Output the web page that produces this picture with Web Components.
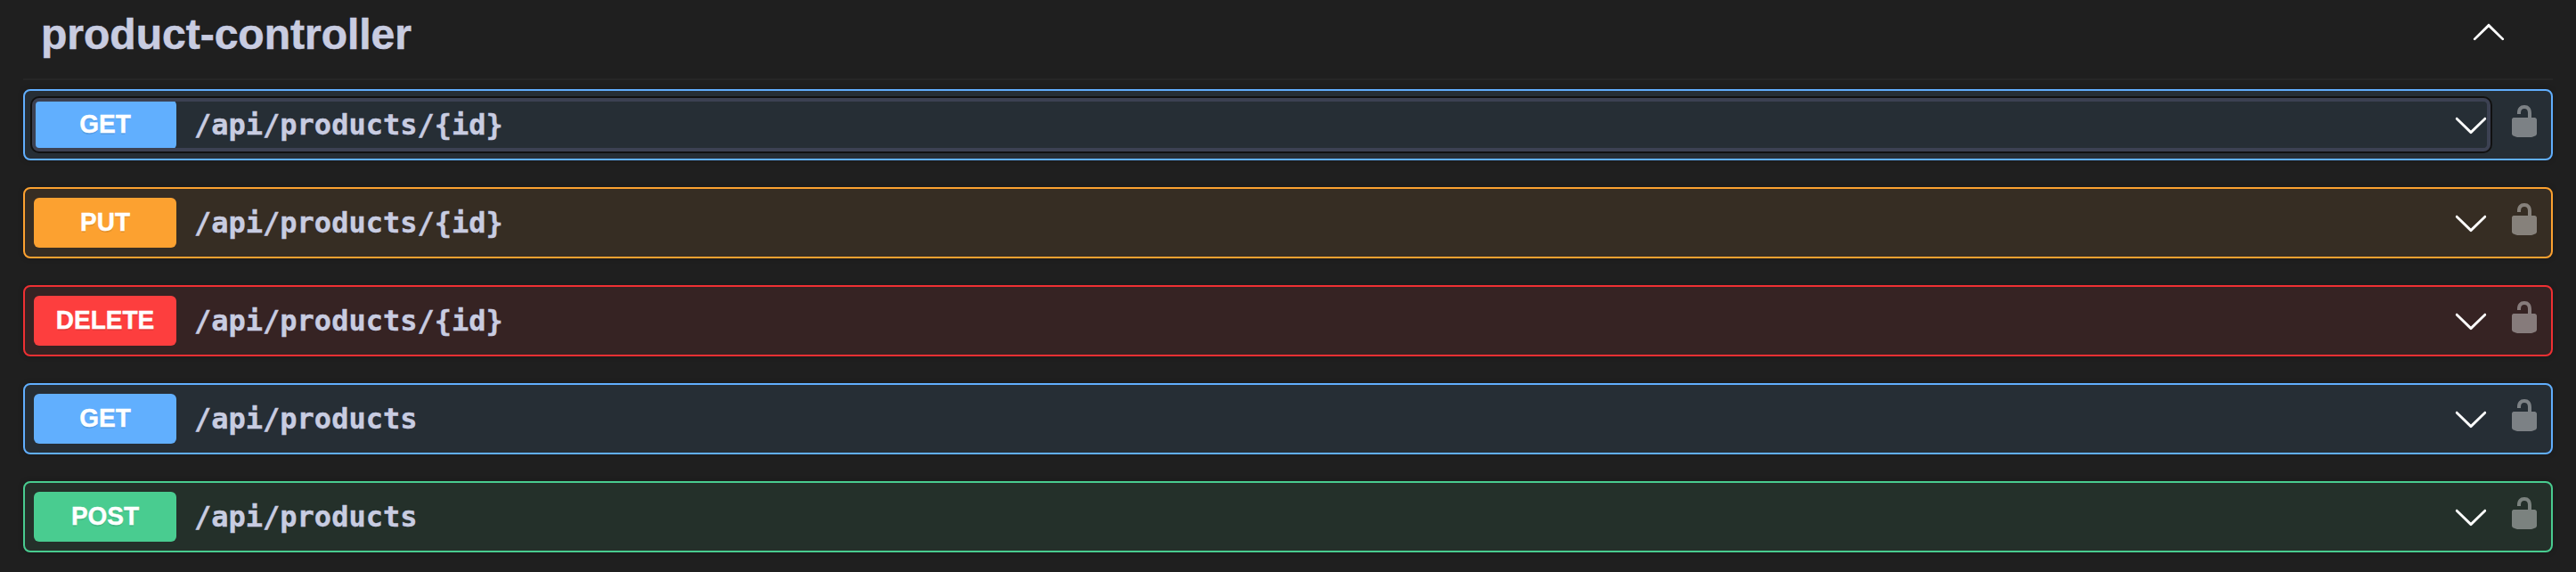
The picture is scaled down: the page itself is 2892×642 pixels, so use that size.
<!DOCTYPE html>
<html lang="en">
<head>
<meta charset="utf-8">
<title>product-controller</title>
<style>
html, body { margin: 0; background: #1f1f1f; }
body { height: 642px; overflow: hidden; font-family: "Liberation Sans", Arial, sans-serif; }
</style>
</head>
<body>
<api-tag name="product-controller">
  <api-operation method="get" path="/api/products/{id}" focused></api-operation>
  <api-operation method="put" path="/api/products/{id}"></api-operation>
  <api-operation method="delete" path="/api/products/{id}"></api-operation>
  <api-operation method="get" path="/api/products"></api-operation>
  <api-operation method="post" path="/api/products"></api-operation>
</api-tag>
<script>
const PATHS = {
  up: 'M17.418 14.908C17.69 15.176 18.127 15.176 18.397 14.908C18.667 14.64 18.668 14.207 18.397 13.939L10.489 6.109C10.219 5.841 9.782 5.841 9.51 6.109L1.602 13.939C1.332 14.207 1.332 14.64 1.602 14.908C1.873 15.176 2.311 15.176 2.581 14.908L10 7.767Z',
  down: 'M17.418 6.109c.272-.268.709-.268.979 0s.271.701 0 .969l-7.908 7.83c-.27.268-.707.268-.979 0l-7.908-7.83c-.27-.268-.27-.701 0-.969.271-.268.709-.268.979 0L10 13.25z',
  unlocked: 'M15.8 8H14V5.6C14 2.703 12.665 1 10 1 7.334 1 6 2.703 6 5.6V6h2v-.801C8 3.754 8.797 3 10 3c1.203 0 2 .754 2 2.199V8H4c-.553 0-1 .646-1 1.199V17c0 .549.428 1.139.951 1.307l1.197.387C5.672 18.861 6.55 19 7.1 19h5.8c.549 0 1.428-.139 1.951-.307l1.196-.387c.524-.167.953-.757.953-1.306V9.199C17 8.646 16.352 8 15.8 8z'
};

class ApiIcon extends HTMLElement {
  connectedCallback() {
    this.attachShadow({ mode: 'open' }).innerHTML = `
      <style>
        :host { display: block; width: 40px; height: 40px; flex: none; color: #fff; }
        svg { display: block; width: 100%; height: 100%; fill: currentColor; }
      </style>
      <svg viewBox="0 0 20 20" aria-hidden="true"><path d="${PATHS[this.getAttribute('name')]}"/></svg>`;
  }
}

class MethodBadge extends HTMLElement {
  constructor() {
    super();
    this.attachShadow({ mode: 'open' }).innerHTML = `
      <style>
        :host { display: flex; align-items: center; justify-content: center; flex: none;
          width: 160px; height: 56px; border-radius: 6px; background: var(--badge, var(--accent));
          color: #fff; font: 700 28px/32px "Liberation Sans", Arial, sans-serif;
          text-shadow: 0 2px 0 rgba(0,0,0,.1); }
        span { display: block; transform: scaleY(1.06); transform-origin: 50% 26px;
          -webkit-text-stroke: .4px currentColor; }
      </style>
      <span><slot></slot></span>`;
  }
}

class ApiOperation extends HTMLElement {
  connectedCallback() {
    this.attachShadow({ mode: 'open' }).innerHTML = `
      <style>
        :host { --accent: #61affe; --tint: #262e35;
          display: flex; align-items: center; box-sizing: border-box; height: 80px;
          padding: 0 10px; border: 2px solid var(--accent); border-radius: 8px;
          background: var(--tint); box-shadow: 0 0 6px rgba(0,0,0,.19); }
        :host([method=put]) { --accent: #fca130; --tint: #362d23; }
        :host([method=delete]) { --accent: #ef3033; --badge: #fd3e3e; --tint: #362323; }
        :host([method=post]) { --accent: #49cc90; --tint: #24302a; }
        .summary { display: flex; align-items: center; flex: 1; height: 56px; border-radius: 6px; }
        :host([focused]) .summary { outline: 4px solid #3c4152; outline-offset: -2px; box-shadow: 0 0 0 4px #111; }
        .path { flex: 1; padding-left: 20px; color: #c8cce1;
          font: 700 32px/38px "DejaVu Sans Mono", monospace; white-space: nowrap;
          -webkit-text-stroke: .4px currentColor; }
        .lock { margin: -8px 0 0 20px; color: rgba(255,255,255,.4); }
      </style>
      <div class="summary">
        <method-badge>${this.getAttribute('method').toUpperCase()}</method-badge>
        <span class="path">${this.getAttribute('path')}</span>
        <api-icon name="down"></api-icon>
      </div>
      <api-icon class="lock" name="unlocked"></api-icon>`;
  }
}

class ApiTag extends HTMLElement {
  connectedCallback() {
    this.attachShadow({ mode: 'open' }).innerHTML = `
      <style>
        :host { display: block; padding: 0 26px; }
        header { display: flex; align-items: flex-start; justify-content: space-between; box-sizing: border-box;
          height: 90px; padding: 11px 52px 0 20px; border-bottom: 2px solid #262626; }
        h3 { margin: 0; color: #c8cce1; font: 700 48px/55px "Liberation Sans", Arial, sans-serif;
          -webkit-text-stroke: .6px currentColor; }
        header api-icon { margin-top: 4px; }
        .list { display: flex; flex-direction: column; gap: 30px; padding-top: 10px; }
      </style>
      <header><h3>${this.getAttribute('name')}</h3><api-icon name="up"></api-icon></header>
      <div class="list"><slot></slot></div>`;
  }
}

customElements.define('api-icon', ApiIcon);
customElements.define('method-badge', MethodBadge);
customElements.define('api-operation', ApiOperation);
customElements.define('api-tag', ApiTag);
</script>
</body>
</html>
